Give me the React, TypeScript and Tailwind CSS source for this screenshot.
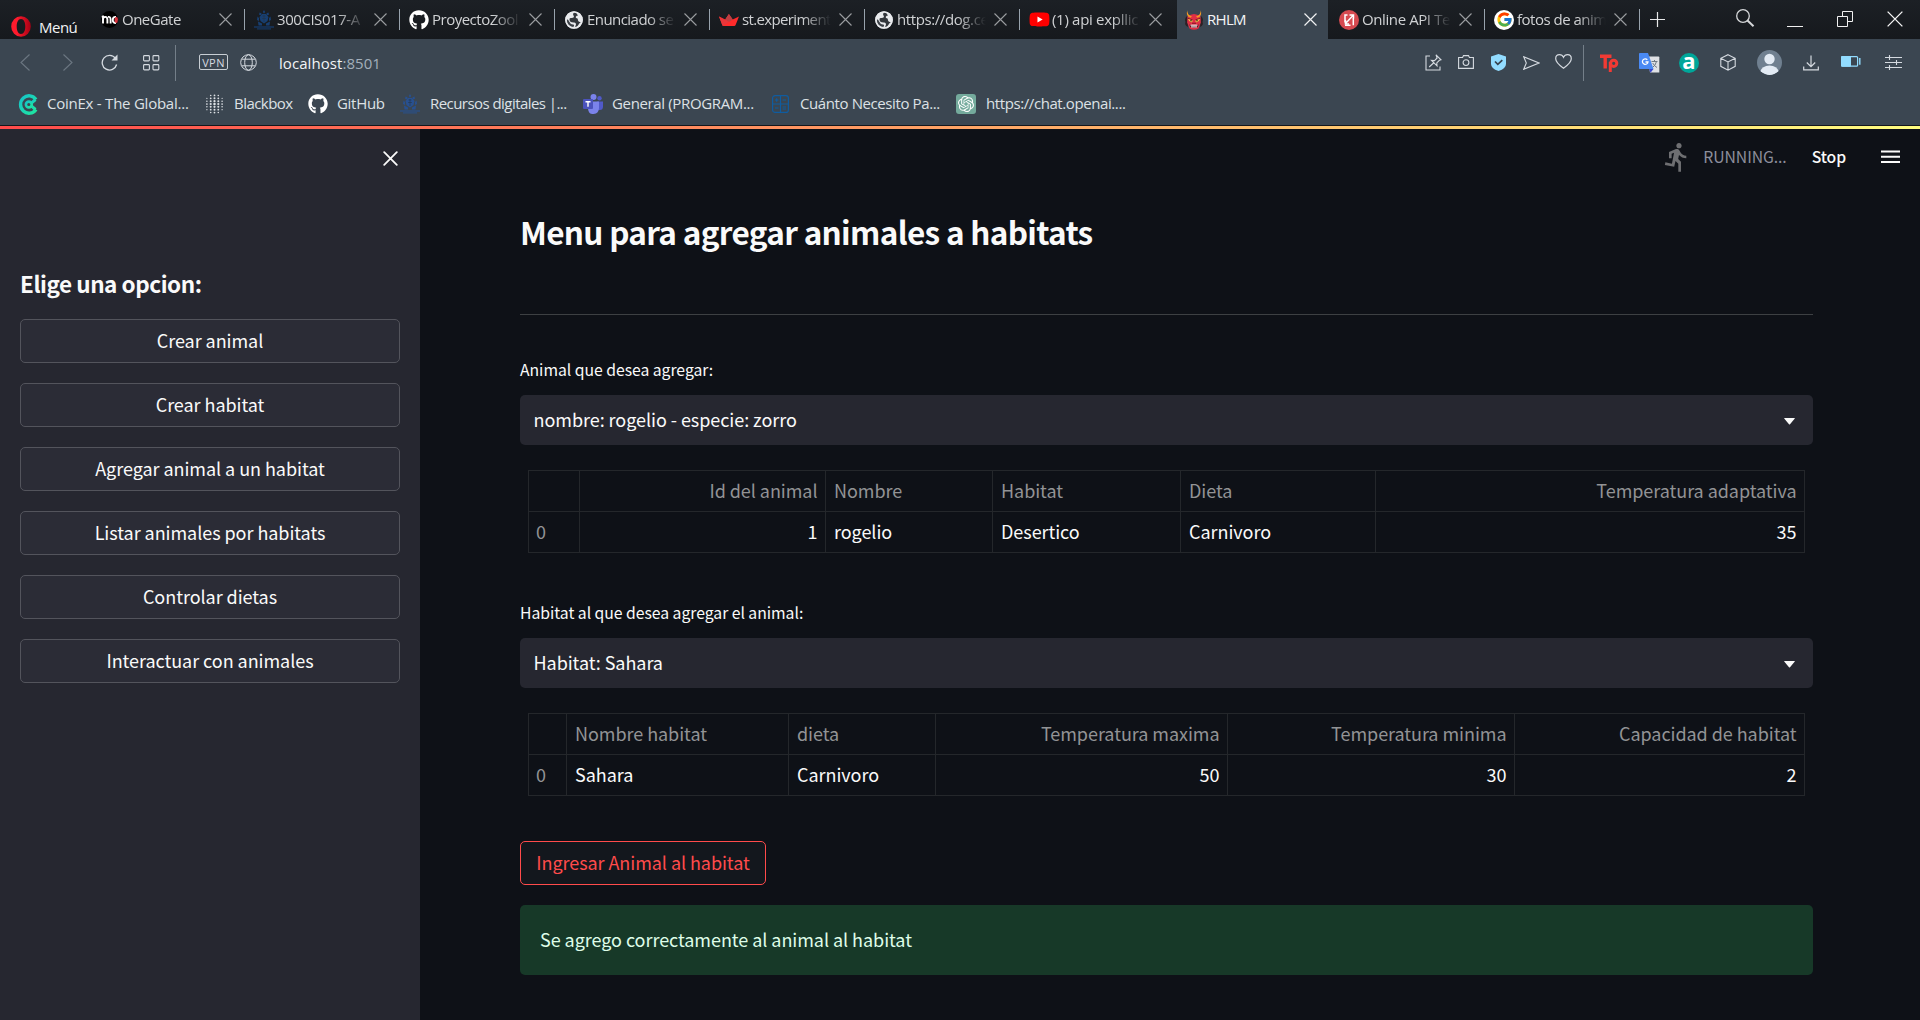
import React from "react";
import { FaGithub, FaYoutube } from "react-icons/fa";
import { FcGoogle } from "react-icons/fc";
import { MdDirectionsRun } from "react-icons/md";
import { SiOpenai } from "react-icons/si";

/* ---------- shared line drawings ---------- */

function Cross({ size = 13, color = "#9a9da0", width = 1.1 }: { size?: number; color?: string; width?: number }) {
  return (
    <svg width={size} height={size} viewBox="0 0 13 13" className="shrink-0">
      <path d="M.5.5l12 12M12.5.5l-12 12" stroke={color} strokeWidth={width} fill="none" />
    </svg>
  );
}

/* ---------- favicons ---------- */

function OneGateIcon() {
  return (
    <span className="flex h-[17px] w-[17px] items-center justify-center overflow-hidden rounded-full bg-black">
      <svg width="17" height="17" viewBox="0 0 17 17">
        <path d="M0 5.400h2v7M2 8.500q0-2.600 2.200-2.600T6.400 8.500v3.900M7 5.900q2.600-.4 2.600 2.600v3.900" stroke="#fff" strokeWidth="1.900" fill="none" />
        <path d="M15 5.900q-3.200-.3-3.200 3t3.200 3" stroke="#fff" strokeWidth="1.900" fill="none" />
        <ellipse cx="15.500" cy="8.900" rx="2" ry="3" fill="#d8323c" />
      </svg>
    </span>
  );
}

function CrestIcon({ color }: { color: string }) {
  return (
    <svg width="20" height="20" viewBox="0 0 20 20" fill={color}>
      <path d="M10 0l1.200 2-1.200 1.400L8.800 2zM5.500 2.500l2 .8-.5 2-2-.6zM14.500 2.500l-2 .8.5 2 2-.6zM8 4h4l2.500 3-1 4-3.500 2.500L6.500 11l-1-4z" />
      <path d="M3.500 6.500L5 8v3l-2-1zM16.500 6.500L15 8v3l2-1zM4 11.500l4 2V15.500H4.500zM16 11.500l-4 2V15.500h3.500z" />
      <path d="M0 16.200h20v1.500H0zM3 18.300h14v1.200H3z" opacity=".8" />
      <path d="M8.500 6h3M8 8.500h4M10 5v7" stroke="#26323f" strokeWidth=".5" />
    </svg>
  );
}

function GlobeTabIcon() {
  return (
    <svg width="18" height="18" viewBox="0 0 18 18">
      <circle cx="9" cy="9" r="8.800" fill="#e8eaed" />
      <path d="M10.500.8Q7 2.500 8.500 4.500T6.500 7Q4 6.500 4.500 9t4 2.500Q11 11 11 13.500L9.500 17.500Q12 17 13 14.500T16 11Q13 11 13 9t-2-2q-1-2 2-2.500Z" fill="#33373c" />
      <path d="M1.500 8q2 .5 3 3T8 13.500 7.500 17Q1.500 15 1.500 8Z" fill="#3c4147" />
      <circle cx="9" cy="9" r="8" fill="none" stroke="#e8eaed" strokeWidth="1.600" />
    </svg>
  );
}

function StreamlitIcon() {
  return (
    <svg width="20" height="12" viewBox="0 0 20 12">
      <path d="M0 2.500L6.200 5.600 9.900 0l3.800 5.600L20 2.500 16.600 11q-.4 1-1.400 1H4.800q-1 0-1.400-1z" fill="#ff2b2b" />
      <path d="M6.200 5.600L9.900 0l3.800 5.600L10 8z" fill="#bd4043" />
      <path d="M0 2.500L10 8 4 12q-.5-.2-.8-1z" fill="#e8363a" />
    </svg>
  );
}

function DevilIcon() {
  return (
    <svg width="20" height="20" viewBox="0 0 20 20">
      <path d="M3 6Q0 9 1.500 12 0 15 4 17M17 6q3 3 1.500 6Q20 15 16 17" fill="#2b2024" />
      <path d="M3.500 6.500Q10 1.500 16.500 6.500l.3 6-2.300 6Q10 21 5.500 18.500l-2.300-6z" fill="#df2f45" />
      <path d="M3.300.2Q3 5 8 6.500L6.500 7.800Q1.500 6 3.300.2zM16.700.2Q17 5 12 6.500l1.500 1.300Q18.500 6 16.700.2z" fill="#f59b22" />
      <path d="M4 8.300l4.800 2.200-.8 1.800Q4.800 12 4 8.300zM16 8.300l-4.800 2.200.8 1.800Q15.200 12 16 8.300z" fill="#f9d24c" />
      <circle cx="7" cy="10.700" r=".8" fill="#30141a" />
      <circle cx="13" cy="10.700" r=".8" fill="#30141a" />
      <path d="M3.600 8.200l5 1.700M16.400 8.200l-5 1.700M8 13.300h4" stroke="#7d1524" strokeWidth=".9" />
      <path d="M5.300 14.400Q10 16 14.700 14.400L13.500 17.300Q10 18 6.500 17.300z" fill="#4a0f18" />
      <path d="M6.500 15.200h7M7 16.900h6" stroke="#fff" strokeWidth="1" />
    </svg>
  );
}

function ApiTesterIcon() {
  return (
    <svg width="20" height="20" viewBox="0 0 20 20">
      <circle cx="10" cy="10" r="10" fill="#d64a50" />
      <g fill="none" stroke="#fff" strokeWidth="1.500">
        <path d="M8.500 5H6v7.500M6 15.200h5.500M14.300 8v7.200" />
        <path d="M7 13l7-7.500M10.500 5h4v3.500M6.500 10v4h3.500" />
      </g>
    </svg>
  );
}

function GoogleTabIcon() {
  return (
    <span className="flex h-5 w-5 items-center justify-center rounded-full bg-white">
      <FcGoogle size={17} />
    </span>
  );
}

/* ---------- tab strip ---------- */

type TabProps = { icon: React.ReactNode; label: string; tracking: string; sep?: boolean };

function Tab({ icon, label, tracking, sep = true }: TabProps) {
  return (
    <div className="flex h-[39px] w-[155px] shrink-0 items-center">
      <span className="ml-[9px] flex w-5 shrink-0 items-center justify-center">{icon}</span>
      <span
        className={`mb-px ml-[3px] w-[89px] overflow-hidden whitespace-nowrap text-[15px] leading-5 text-[#d0d2d4] [mask-image:linear-gradient(to_right,#000_68%,transparent_100%)] ${tracking}`}
      >
        {label}
      </span>
      <span className="ml-2 flex">
        <Cross />
      </span>
      <span className={sep ? "ml-auto h-[21px] w-px bg-[#98a3ad]" : "ml-auto"} />
    </div>
  );
}

function TabStrip() {
  return (
    <div className="flex h-[39px] bg-gradient-to-b from-[#1c2025] to-[#16191d]">
      <div className="flex w-[90px] shrink-0 items-start pl-[11px] pt-4">
        <svg width="20" height="21" viewBox="0 0 20 21" className="shrink-0">
          <defs>
            <linearGradient id="op" x1="0" x2="1">
              <stop offset=".3" stopColor="#ff1b2d" />
              <stop offset="1" stopColor="#a70014" />
            </linearGradient>
          </defs>
          <path fillRule="evenodd" fill="url(#op)" d="M10 .2a9.800 10.300 0 1 0 0 20.600 9.800 10.300 0 0 0 0-20.600zm0 2.800c2.800 0 4.300 3.200 4.300 7.500S12.800 18 10 18s-4.300-3.200-4.300-7.500S7.200 3 10 3z" />
        </svg>
        <span className="ml-2 mt-px text-[15px] leading-5 tracking-[-0.5px] text-[#f2f3f4]">Menú</span>
      </div>
      <Tab icon={<OneGateIcon />} label="OneGate" tracking="tracking-[-0.5px]" />
      <Tab icon={<CrestIcon color="#173f72" />} label="300CIS017-A" tracking="tracking-[-0.45px]" />
      <Tab icon={<FaGithub size={20} color="#fff" />} label="ProyectoZool" tracking="tracking-[-0.5px]" />
      <Tab icon={<GlobeTabIcon />} label="Enunciado se" tracking="tracking-[-0.55px]" />
      <Tab icon={<StreamlitIcon />} label="st.experiment" tracking="tracking-[-0.65px]" />
      <Tab icon={<GlobeTabIcon />} label="https://dog.ce" tracking="tracking-[-0.4px]" />
      <Tab
        icon={
          <span className="relative flex">
            <span className="absolute inset-1 bg-white" />
            <FaYoutube size={21} color="#ff0000" className="relative" />
          </span>
        }
        label="(1) api expllic"
        tracking="tracking-[-0.3px]"
        sep={false}
      />
      <div className="ml-[2px] flex w-[151px] shrink-0 items-center bg-[#3b4651]">
        <span className="ml-[7px]">
          <DevilIcon />
        </span>
        <span className="mb-px ml-[3px] w-[97px] text-[15px] leading-5 tracking-[-0.7px] text-[#f4f5f6]">RHLM</span>
        <Cross color="#f0f1f2" width={1.2} />
      </div>
      <div className="ml-[2px] flex">
        <Tab icon={<ApiTesterIcon />} label="Online API Te" tracking="tracking-[-0.4px]" />
        <Tab icon={<GoogleTabIcon />} label="fotos de anim" tracking="tracking-[-0.5px]" />
      </div>
      <svg width="15" height="15" viewBox="0 0 15 15" className="ml-[10px] mt-3 shrink-0" stroke="#e8e9ea" strokeWidth="1.200">
        <path d="M7.500 0v15M0 7.500h15" />
      </svg>
      <svg width="19" height="19" viewBox="0 0 19 19" className="ml-[71px] mt-[9px] shrink-0" fill="none" stroke="#d5d7d9" strokeWidth="1.300">
        <circle cx="7" cy="7" r="6.300" />
        <path d="M11.500 11.500l6 5.700" strokeWidth="2" />
      </svg>
      <span className="ml-8 mt-[26px] h-px w-4 shrink-0 bg-[#f0f0f0]" />
      <svg width="17" height="17" viewBox="0 0 17 17" className="ml-[34px] mt-[11px] shrink-0" fill="none" stroke="#f0f0f0" strokeWidth="1">
        <path d="M.5 5.500h10v10H.5zM5.500 5.500v-5h10v10h-5" />
      </svg>
      <span className="ml-[33px] mt-[11px] flex">
        <Cross size={16} color="#f4f4f4" />
      </span>
    </div>
  );
}

/* ---------- address bar ---------- */

function AddressBar() {
  return (
    <div className="flex h-[47px] items-center text-[#d5dae0]">
      <div className="flex w-[175px] shrink-0 items-center">
        <svg width="10" height="17" viewBox="0 0 10 17" className="ml-5" fill="none" stroke="#6c7782" strokeWidth="1.100">
          <path d="M9.500.5l-8.500 8 8.500 8" />
        </svg>
        <svg width="10" height="17" viewBox="0 0 10 17" className="ml-[33px]" fill="none" stroke="#6c7782" strokeWidth="1.100">
          <path d="M.5.5l8.500 8-8.500 8" />
        </svg>
        <svg width="17" height="17" viewBox="0 0 17 17" className="ml-7" fill="none" stroke="currentColor" strokeWidth="1.300">
          <path d="M14.500 4.500A7.300 7.300 0 1 0 15.600 10.500" />
          <path d="M16.500.5v6h-6z" fill="currentColor" stroke="none" />
        </svg>
        <svg width="17" height="16" viewBox="0 0 17 16" className="ml-[25px]" fill="none" stroke="currentColor" strokeWidth="1.100">
          <rect x=".6" y=".6" width="5.800" height="5.300" rx=".8" />
          <rect x="10" y=".6" width="5.800" height="5.300" rx=".8" />
          <rect x=".6" y="9.600" width="5.800" height="5.300" rx=".8" />
          <rect x="10" y="9.600" width="5.800" height="5.300" rx=".8" />
        </svg>
      </div>
      <span className="h-9 w-px bg-[#747f89]" />
      <span className="mb-px ml-[23px] flex h-4 w-[29px] items-center justify-center rounded-[2px] border border-[#c8ced4] text-[11px] leading-none tracking-[0.4px]">VPN</span>
      <svg width="17" height="17" viewBox="0 0 17 17" className="mb-px ml-3" fill="none" stroke="currentColor" strokeWidth="1">
        <circle cx="8.500" cy="8.500" r="7.800" />
        <ellipse cx="8.500" cy="8.500" rx="3.800" ry="7.800" />
        <path d="M1.600 5.200h13.800M1.600 11.800h13.800" />
      </svg>
      <span className="ml-[22px] text-[15px] leading-5 tracking-[0.06px] text-[#f2f4f6]">
        localhost<span className="text-[#a3afbb]">:8501</span>
      </span>

      <svg width="17" height="17" viewBox="0 0 17 17" className="mb-px ml-auto" fill="none" stroke="currentColor" strokeWidth="1.100">
        <path d="M5 2H1v14h14v-3.500" />
        <path d="M11 .8l5 5-1.600.5-2.600 2.600.2 3-5.500-5.500 3 .2 2.600-2.600zM8.500 9l-4.300 4" />
      </svg>
      <svg width="16" height="14" viewBox="0 0 16 14" className="mb-px ml-4" fill="none" stroke="currentColor" strokeWidth="1.100">
        <path d="M.6 2.500h4L5.500.6h5l.9 1.900h4v10.900H.6z" />
        <circle cx="8" cy="7.600" r="2.900" />
      </svg>
      <svg width="15" height="17" viewBox="0 0 15 17" className="mb-px ml-[17px]">
        <path d="M7.500 0L15 2.600V10q0 4.500-7.500 7Q0 14.500 0 10V2.600z" fill="#92dcff" />
        <path d="M4 7.500l2.800 2.900 4.500-4.300" fill="none" stroke="#36424d" strokeWidth="1.700" />
      </svg>
      <svg width="17" height="14" viewBox="0 0 17 14" className="ml-[17px] mt-px" fill="none" stroke="currentColor" strokeWidth="1.100">
        <path d="M.7.7L16 7 .7 13.300l2.600-6.300z" />
      </svg>
      <svg width="17" height="15" viewBox="0 0 17 15" className="mb-[2px] ml-[15px]" fill="none" stroke="currentColor" strokeWidth="1.200">
        <path d="M8.500 14.200Q.7 8.500.7 4.700q0-4 3.800-4 2.800 0 4 2.600 1.200-2.600 4-2.600 3.800 0 3.800 4 0 3.800-7.800 9.500z" />
      </svg>
      <span className="ml-[11px] h-9 w-px bg-[#747f89]" />
      <svg width="19" height="18" viewBox="0 0 19 18" className="ml-4" fill="none" stroke="#f23a34" strokeWidth="3.400">
        <path d="M0 2.200h11.500M5.200 2v12.500" />
        <circle cx="13.700" cy="9.300" r="3.100" strokeWidth="3" />
        <path d="M10.300 8v10" strokeWidth="3" />
      </svg>
      <svg width="21" height="20" viewBox="0 0 21 20" className="ml-5">
        <path d="M8 3.500h11.500q.8 0 .8.800V19.500H11z" fill="#dfe1e5" />
        <path d="M12.500 8.500h6M15.500 7v1.500M17.500 8.500q-1 4-4 6M13.700 10q1.500 3 4.300 4.500" stroke="#6f7a86" strokeWidth="1" fill="none" />
        <path d="M10 16h4.500L11.500 19.700z" fill="#3a49c9" />
        <path d="M.8 0h8.200l5.500 16H.8Q0 16 0 15.200V.8Q0 0 .8 0z" fill="#4a8af4" />
        <path d="M8.300 6.700A2.800 2.800 0 1 0 9 9H6.500" stroke="#fff" strokeWidth="1.300" fill="none" />
      </svg>
      <span className="ml-[19px] flex h-5 w-5 items-center justify-center rounded-full bg-[#00a699] pb-[5px] font-['Open_Sans'] text-[22px] font-bold leading-none text-white">a</span>
      <svg width="16" height="17" viewBox="0 0 16 17" className="ml-[21px]" fill="none" stroke="currentColor" strokeWidth="1.100">
        <path d="M8 .7l7.200 3.600v8L8 16.200.8 12.300v-8zM.8 4.300L8 8l7.200-3.700M8 8v8" />
      </svg>
      <svg width="25" height="25" viewBox="0 0 25 25" className="ml-[21px]">
        <defs>
          <clipPath id="av">
            <circle cx="12.500" cy="12.500" r="12.500" />
          </clipPath>
        </defs>
        <g clipPath="url(#av)">
          <rect width="25" height="25" fill="#708090" />
          <circle cx="12.500" cy="9" r="5.200" fill="#e3ebf4" />
          <path d="M3 22q2-6.500 9.500-6.500T22 22l-9 4z" fill="#e3ebf4" />
        </g>
      </svg>
      <svg width="16" height="16" viewBox="0 0 16 16" className="ml-[21px]" fill="none" stroke="currentColor" strokeWidth="1.200">
        <path d="M8 .5v11M3.800 7.500L8 11.700l4.200-4.200M.7 11.500v3.400h14.600v-3.400" />
      </svg>
      <svg width="20" height="11" viewBox="0 0 20 11" className="-mt-[2px] ml-[22px]">
        <rect x=".6" y=".6" width="16" height="9.600" rx="1" fill="none" stroke="#92dcff" strokeWidth="1.200" />
        <rect x="0" y="0" width="10" height="10.800" rx="1" fill="#92dcff" />
        <path d="M18.800 2v6.800" stroke="#92dcff" strokeWidth="1.400" />
      </svg>
      <svg width="17" height="15" viewBox="0 0 17 15" className="ml-6 mr-[18px]" fill="none" stroke="currentColor" strokeWidth="1.100">
        <path d="M0 2.500h17M0 7.500h17M0 12.500h17M4.500 0v5M11.500 5v5M4.500 10v5" />
      </svg>
    </div>
  );
}

/* ---------- bookmarks ---------- */

const dots = [
  [10, 1], [6, 1], [14, 1], [2, 0.85], [18, 0.85],
];

function BlackboxIcon() {
  return (
    <svg width="19" height="20" viewBox="0 0 20 20" fill="#dde1e5">
      {dots.map(([x, r], c) =>
        [1, 4, 7, 10, 13, 16, 19].map((y) => {
          const far = Math.abs(y - 10) / 9 + Math.abs(x - 10) / 12;
          return far < 1.35 ? <circle key={`${c}-${y}`} cx={x} cy={y} r={r + 0.3 - far * 0.35} /> : null;
        })
      )}
    </svg>
  );
}

function CoinExIcon() {
  return (
    <svg width="20" height="21" viewBox="0 0 20 21" fill="none" strokeWidth="3.400">
      <defs>
        <linearGradient id="cx" x1="0" y1="0" x2="1" y2="1">
          <stop offset="0" stopColor="#16c4c8" />
          <stop offset="1" stopColor="#1fe6a0" />
        </linearGradient>
      </defs>
      <path d="M18 5.500A8.500 8.700 0 1 0 18 15.500" stroke="url(#cx)" />
      <path d="M17.500 5.500L13 9.300M17.500 15.500L13 11.700" stroke="url(#cx)" strokeWidth="3" />
      <circle cx="10.800" cy="10.500" r="2.900" stroke="url(#cx)" strokeWidth="2.600" />
    </svg>
  );
}

function TeamsIcon() {
  return (
    <svg width="20" height="20" viewBox="0 0 20 20">
      <circle cx="16.500" cy="4.300" r="2.200" fill="#5059c9" />
      <path d="M14 7.500h6v5q0 3.500-3.200 3.500H14z" fill="#5059c9" />
      <circle cx="10.500" cy="3" r="3" fill="#7b83eb" />
      <path d="M5 7.500h11v6.500q0 5.500-5.500 6T5 14z" fill="#7b83eb" />
      <rect y="5" width="10" height="10" rx="1" fill="#4b53bc" />
      <path d="M2.500 7.700h5M5 7.700v5" stroke="#fff" strokeWidth="1.400" />
    </svg>
  );
}

function CalcIcon() {
  return (
    <svg width="17" height="20" viewBox="0 0 17 20" fill="none" stroke="#0f5ca0" strokeWidth="1.200">
      <rect x=".6" y="1.600" width="15.800" height="16.800" rx="2.500" />
      <path d="M8.500 2v16M1 10h15M3 6h3.500M4.700 4.300v3.500M10.500 6H14M3 14h3.500M10.500 13H14M10.500 15H14" />
    </svg>
  );
}

function Bookmarks() {
  const items = [
    { icon: <CoinExIcon />, text: "CoinEx - The Global...", box: "w-[187px]", label: "ml-[9px] tracking-[-0.24px]" },
    { icon: <BlackboxIcon />, text: "Blackbox", box: "w-[103px]", label: "ml-[10px] tracking-[-0.55px]" },
    { icon: <FaGithub size={20} color="#fff" />, text: "GitHub", box: "w-[92px]", label: "ml-[9px] tracking-[-0.3px]" },
    { icon: <CrestIcon color="#28508f" />, text: "Recursos digitales |...", box: "w-[183px]", label: "ml-[10px] tracking-[-0.55px]" },
    { icon: <TeamsIcon />, text: "General (PROGRAM...", box: "w-[189px]", label: "ml-[9px] tracking-[-0.35px]" },
    { icon: <CalcIcon />, text: "Cuánto Necesito Pa...", box: "w-[184px]", label: "ml-[11px] tracking-[-0.4px]" },
    {
      icon: (
        <span className="flex h-5 w-5 items-center justify-center rounded-[3px] bg-[#74aa9c]">
          <SiOpenai size={16} color="#fff" />
        </span>
      ),
      text: "https://chat.openai....",
      box: "w-[180px]",
      label: "ml-[10px] tracking-[-0.41px]",
    },
  ];
  return (
    <div className="flex h-[39px] items-center pb-[3px] pl-[18px]">
      {items.map((it) => (
        <div key={it.text} className={`flex shrink-0 items-center ${it.box}`}>
          <span className="flex shrink-0">{it.icon}</span>
          <span className={`mb-[2px] whitespace-nowrap text-[15px] leading-5 text-[#dde1e5] ${it.label}`}>{it.text}</span>
        </div>
      ))}
    </div>
  );
}

/* ---------- application ---------- */

const options = [
  "Crear animal",
  "Crear habitat",
  "Agregar animal a un habitat",
  "Listar animales por habitats",
  "Controlar dietas",
  "Interactuar con animales",
];

function Sidebar() {
  return (
    <aside className="w-[420px] shrink-0 bg-[#262730] px-5">
      <div className="flex justify-end pr-[2px] pt-[22px]">
        <svg width="15" height="15" viewBox="0 0 15 15" fill="none" stroke="#fafafa" strokeWidth="1.800" strokeLinecap="round">
          <path d="M1.200 1.200l12.600 12.600M13.800 1.200L1.200 13.800" />
        </svg>
      </div>
      <h2 className="mt-[102px] text-[22.5px] font-bold leading-[30px] tracking-[-0.45px] text-[#fafafa]">Elige una opcion:</h2>
      <div className="mt-[21px] flex flex-col gap-5">
        {options.map((o) => (
          <button key={o} className="h-11 rounded-[5px] border border-[#53545c] bg-[#2b2c36] pb-[2px] text-[18px] leading-[30px] tracking-[-0.05px] text-[#fafafa]">
            {o}
          </button>
        ))}
      </div>
    </aside>
  );
}

function Select({ label, value }: { label: string; value: string }) {
  return (
    <div>
      <div className="text-[15.75px] leading-[26px] tracking-[-0.03px] text-[#fafafa]">{label}</div>
      <div className="mt-3 flex h-[50px] items-center justify-between rounded-[5px] bg-[#262730] pl-[13.5px] pr-[18px] text-[18px] leading-[30px] tracking-[-0.05px] text-[#fafafa]">
        <span className="mb-[2px]">{value}</span>
        <svg width="11" height="7" viewBox="0 0 11 7" fill="#fafafa" className="mt-[2px]">
          <path d="M.4 0h10.200q.5.300 0 .8L6 6.300q-.5.400-1 0L.4.800Q-.1.300.4 0z" />
        </svg>
      </div>
    </div>
  );
}

type Col = { head: string; value: string; right?: boolean };

function DataTable({ cols, grid }: { cols: Col[]; grid: string }) {
  return (
    <div className={`ml-2 mr-2 mt-[25px] grid border-l border-t border-[#24272b] text-[18px] leading-[30px] tracking-[-0.05px] ${grid}`}>
      {cols.map((c, i) => (
        <div key={`h${i}`} className={`h-[41px] border-b border-r border-[#24272b] pl-2 pr-[7.5px] pt-1 text-[#929395] ${c.right ? "text-right" : ""}`}>
          {c.head}
        </div>
      ))}
      {cols.map((c, i) => (
        <div
          key={`v${i}`}
          className={`h-[41px] border-b border-r border-[#24272b] pr-[7.5px] pt-1 ${i === 0 ? "pl-[7px] text-[#929395]" : "pl-2 text-[#fafafa]"} ${c.right ? "text-right" : ""}`}
        >
          {c.value}
        </div>
      ))}
    </div>
  );
}

function Main() {
  return (
    <main className="flex-1 bg-[#0e1117]">
      <div className="flex h-14 items-center justify-end pr-5 text-[15.75px] leading-6">
        <MdDirectionsRun size={32} color="#6e6f72" />
        <span className="ml-2.5 tracking-[-0.08px] text-[#8c8e9c]">RUNNING...</span>
        <span className="ml-[25px] font-medium tracking-[-0.1px] text-[#fafafa]">Stop</span>
        <svg width="19" height="14" viewBox="0 0 19 14" className="ml-[35px]" stroke="#fafafa" strokeWidth="2">
          <path d="M0 1.500h19M0 6.800h19M0 12.100h19" />
        </svg>
      </div>
      <div className="ml-[100px] w-[1293px]">
        <h1 className="mt-[25px] text-[31.5px] font-bold leading-[42px] tracking-[-0.68px] text-[#fafafa]">Menu para agregar animales a habitats</h1>
        <hr className="mb-[42px] mt-[62px] border-[#3d4043]" />
        <Select label="Animal que desea agregar:" value="nombre: rogelio - especie: zorro" />
        <DataTable
          grid="grid-cols-[51px_246px_167px_188px_195px_429px]"
          cols={[
            { head: "", value: "0" },
            { head: "Id del animal", value: "1", right: true },
            { head: "Nombre", value: "rogelio" },
            { head: "Habitat", value: "Desertico" },
            { head: "Dieta", value: "Carnivoro" },
            { head: "Temperatura adaptativa", value: "35", right: true },
          ]}
        />
        <div className="h-[47px]" />
        <Select label="Habitat al que desea agregar el animal:" value="Habitat: Sahara" />
        <DataTable
          grid="grid-cols-[38px_222px_147px_292px_287px_290px]"
          cols={[
            { head: "", value: "0" },
            { head: "Nombre habitat", value: "Sahara" },
            { head: "dieta", value: "Carnivoro" },
            { head: "Temperatura maxima", value: "50", right: true },
            { head: "Temperatura minima", value: "30", right: true },
            { head: "Capacidad de habitat", value: "2", right: true },
          ]}
        />
        <button className="mt-[45px] block h-11 w-[246px] whitespace-nowrap rounded-[5px] border border-[#ff4b4b] bg-[#13171d] pb-[2px] text-[18px] leading-[30px] tracking-[-0.06px] text-[#ff4b4b]">
          Ingresar Animal al habitat
        </button>
        <div className="mt-5 flex h-[70px] items-center rounded-[5px] bg-[#173928] pb-[2px] pl-5 text-[18px] leading-[30px] tracking-[-0.05px] text-[#dffde9]">
          Se agrego correctamente al animal al habitat
        </div>
      </div>
    </main>
  );
}

export default function App() {
  return (
    <div className="flex h-[1020px] w-[1920px] flex-col overflow-hidden bg-[#0e1117]">
      <header className="bg-[#3b4651] font-['Open_Sans','Noto_Sans',sans-serif]">
        <TabStrip />
        <AddressBar />
        <Bookmarks />
      </header>
      <div className="h-px shrink-0 bg-[#14171c]" />
      <div className="h-[3px] shrink-0 bg-[linear-gradient(90deg,#ff4b4b,#fffd80)]" />
      <div className="flex flex-1 font-['Noto_Sans_CJK_SC','Noto_Sans',sans-serif]">
        <Sidebar />
        <Main />
      </div>
    </div>
  );
}
